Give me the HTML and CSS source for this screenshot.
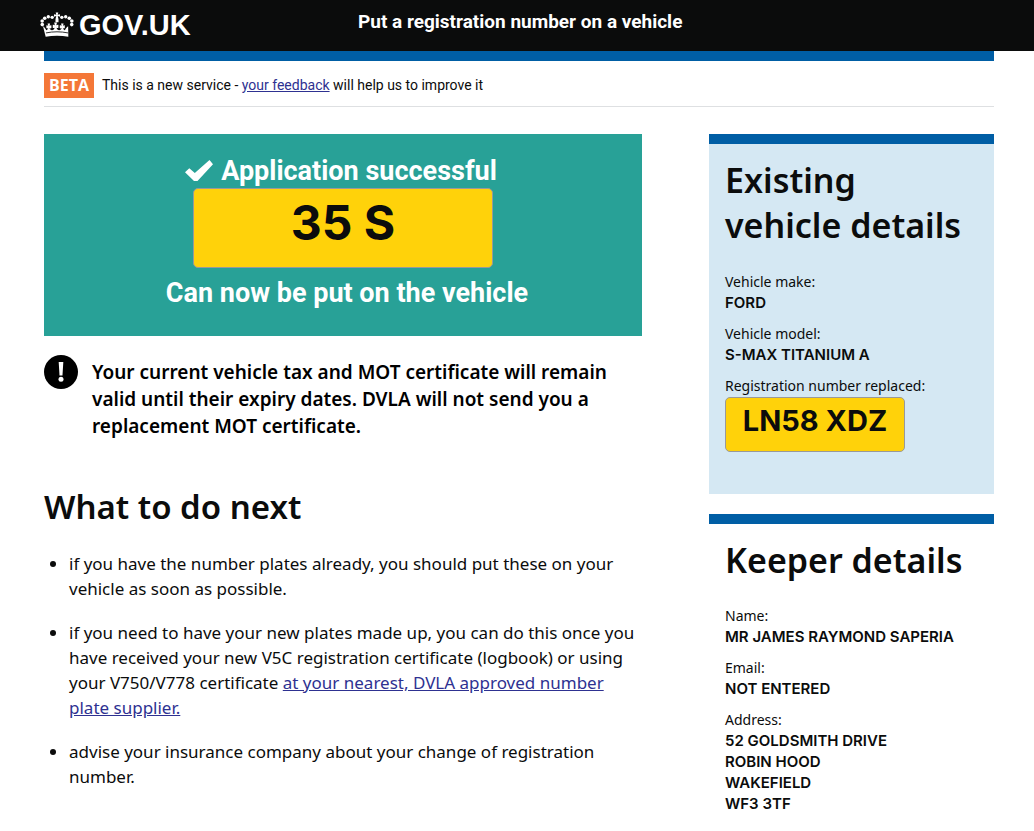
FILE: index.html
```html
<!DOCTYPE html>
<html lang="en">
<head>
<meta charset="utf-8">
<title>Put a registration number on a vehicle - GOV.UK</title>
<link rel="stylesheet" href="styles.css">
</head>
<body>
<header class="site-header">
  <div class="header-inner">
    <a class="logo" href="#">
      <svg class="crown" viewBox="0 0 36 28" aria-hidden="true">
        <g fill="#fff">
          <path d="M16.6 0.8h2.8l-.7 2.4 2.500-.7v2.800l-2.400-.7.8 3.400v3.200h-3.200V8l.8-3.400-2.400.7V2.500l2.500.7z"/>
          <circle cx="12.900" cy="5.900" r="1.800"/><circle cx="8.800" cy="5.300" r="1.800"/><circle cx="5" cy="6.800" r="1.900"/><circle cx="2.300" cy="9.700" r="1.900"/><circle cx="2.400" cy="13.600" r="1.900"/>
          <circle cx="23.100" cy="5.900" r="1.800"/><circle cx="27.200" cy="5.300" r="1.800"/><circle cx="31" cy="6.800" r="1.900"/><circle cx="33.700" cy="9.700" r="1.900"/><circle cx="33.600" cy="13.600" r="1.900"/>
          <path d="M3.200 15.200c1.500 1 2.600 2.400 3.400 4.300.9-.2 1.700-.9 2.100-2-.8.3-1.500.2-2-.3l.1-2.900c.7-.2 1.400 0 1.900.5l-.7-2.400h2.700l-.6 2.400c.6-.5 1.300-.7 2-.4v2.900c-.7.4-1.400.4-2-.1.300 1.400 1.200 2.300 2.600 2.400 1.500-.2 2.500-1.200 2.800-2.700-.7.5-1.300.5-2 .1v-3.300c.8-.2 1.500 0 2.200.6l-.7-2.900h3l-.7 2.900c.7-.6 1.400-.8 2.200-.6V17c-.7.400-1.300.400-2-.1.300 1.500 1.300 2.500 2.800 2.700 1.400-.1 2.300-1 2.600-2.400-.6.500-1.300.500-2 .1v-2.900c.7-.3 1.400-.1 2 .4l-.6-2.400h2.700l-.7 2.400c.5-.5 1.200-.7 1.900-.5l.1 2.900c-.5.500-1.200.600-2 .3.400 1.100 1.200 1.800 2.100 2 .8-1.900 1.900-3.300 3.400-4.300L30 26.500c-7.500-1.500-16.500-1.500-24 0z"/>
        </g>
        <path d="M6.300 22.400c7.600-1.600 15.800-1.600 23.400 0" fill="none" stroke="#0b0c0c" stroke-width=".9"/>
      </svg>
      <span>GOV.UK</span>
    </a>
    <p class="service-name">Put a registration number on a vehicle</p>
  </div>
</header>
<div class="page">
  <div class="blue-bar"></div>
  <div class="phase">
    <strong class="tag">BETA</strong>
    <span>This is a new service - <a href="#">your feedback</a> will help us to improve it</span>
  </div>
  <div class="columns">
    <main>
      <section class="success">
        <h1><svg class="tick" viewBox="0 0 28 22" aria-hidden="true"><path d="M0 12.200 4.300 8.300 9.800 13 24.500 0 28 4.200 12.500 21H9z" fill="#fff"/></svg>Application successful</h1>
        <div class="plate plate-large">35 S</div>
        <p>Can now be put on the vehicle</p>
      </section>
      <div class="notice">
        <svg class="notice-icon" viewBox="0 0 34 34" role="img" aria-label="Important"><circle cx="17" cy="17" r="17"/><path d="M14.700 7h4.600l-.8 13.500h-3z" fill="#fff"/><circle cx="17" cy="24.200" r="2.500" fill="#fff"/></svg>
        <p>Your current vehicle tax and MOT certificate will remain valid until their expiry dates. DVLA will not send you a replacement MOT certificate.</p>
      </div>
      <h2>What to do next</h2>
      <ul class="steps">
        <li>if you have the number plates already, you should put these on your vehicle as soon as possible.</li>
        <li>if you need to have your new plates made up, you can do this once you have received your new V5C registration certificate (logbook) or using your V750/V778 certificate <a href="#">at your nearest, DVLA approved number plate supplier.</a></li>
        <li>advise your insurance company about your change of registration number.</li>
      </ul>
    </main>
    <aside>
      <section class="panel panel-tinted">
        <h2>Existing vehicle details</h2>
        <dl>
          <div><dt>Vehicle make:</dt><dd>FORD</dd></div>
          <div><dt>Vehicle model:</dt><dd>S-MAX TITANIUM A</dd></div>
          <div><dt>Registration number replaced:</dt><dd class="plate plate-small">LN58 XDZ</dd></div>
        </dl>
      </section>
      <section class="panel">
        <h2>Keeper details</h2>
        <dl>
          <div><dt>Name:</dt><dd>MR JAMES RAYMOND SAPERIA</dd></div>
          <div><dt>Email:</dt><dd>NOT ENTERED</dd></div>
          <div><dt>Address:</dt><dd>52 GOLDSMITH DRIVE<br>ROBIN HOOD<br>WAKEFIELD<br>WF3 3TF</dd></div>
        </dl>
      </section>
    </aside>
  </div>
</div>
</body>
</html>
```
FILE: styles.css
```css
* { box-sizing: border-box; }
body { margin: 0; background: #fff; color: #0b0c0c; font-family: "Noto Sans", "Open Sans", sans-serif; font-size: 17px; line-height: 25px; }
h1, h2, p, ul, dl, dd { margin: 0; padding: 0; }
a { color: #2e3191; }
.site-header { background: #0b0c0c; color: #fff; }
.header-inner { display: grid; grid-template-columns: 1fr 2fr; padding: 0 40px; min-height: 51px; }
.logo { display: flex; align-items: center; align-self: start; gap: 5px; color: #fff; text-decoration: none; font-family: "Liberation Sans", Arial, sans-serif; font-size: 29px; font-weight: 700; line-height: 50px; }
.crown { width: 34px; height: 28px; }
.service-name { padding-top: 8px; font-family: Roboto, sans-serif; font-size: 19px; line-height: 27px; font-weight: 700; }
.page { padding: 0 40px 0 44px; }
.blue-bar { height: 10px; background: #005ea5; }
.phase { display: flex; align-items: center; gap: 8px; padding: 12px 0 8px; border-bottom: 1px solid #dee0e2; font-family: Roboto, sans-serif; font-size: 14px; }
.tag { padding: 0 5px; background: #f47738; color: #fff; font-family: "Open Sans", sans-serif; font-size: 16px; font-weight: 700; }
.columns { display: grid; grid-template-columns: minmax(0, 1fr) 30%; column-gap: 67px; padding-top: 27px; align-items: start; }
.success { display: flex; flex-direction: column; align-items: center; min-height: 202px; padding-top: 20px; background: #28a197; color: #fff; text-align: center; }
.success h1, .success p { font-family: Roboto, sans-serif; font-size: 27px; line-height: 34px; font-weight: 700; }
.success h1 { display: flex; align-items: center; gap: 8px; padding-right: 4px; }
.success p { padding: 8px 0 0 8px; }
.tick { width: 28px; height: 22px; }
.plate { border: 1px solid #999; border-radius: 5px; background: #ffd20a; color: #0b0c0c; font-family: Inter, sans-serif; font-weight: 700; text-align: center; }
.plate-large { width: 300px; height: 80px; font-size: 48px; line-height: 68px; }
.panel .plate-small { width: 180px; height: 55px; margin-top: 1px; font-size: 29px; line-height: 46px; font-weight: 700; }
.notice { display: flex; align-items: flex-start; gap: 14px; padding-top: 19px; color: #000; }
.notice-icon { flex: none; width: 34px; height: 34px; }
.notice p { padding-top: 4px; font-size: 19px; line-height: 27px; font-weight: 600; }
main h2 { padding: 44px 0 22px; font-size: 33px; line-height: 45px; font-weight: 600; }
.steps { padding-left: 25px; }
.steps li { margin-bottom: 19px; }
.panel { margin-bottom: 20px; padding: 14px 16px; border-top: 10px solid #005ea5; font-size: 14px; line-height: 21px; }
.panel-tinted { min-height: 360px; background: #d5e8f3; }
.panel h2 { font-size: 34px; line-height: 45px; font-weight: 600; }
.panel dl { display: grid; gap: 10px; padding-top: 22px; }
.panel-tinted dl { padding-top: 23px; }
.panel dd { font-family: Inter, sans-serif; font-size: 15px; font-weight: 600; }
```
